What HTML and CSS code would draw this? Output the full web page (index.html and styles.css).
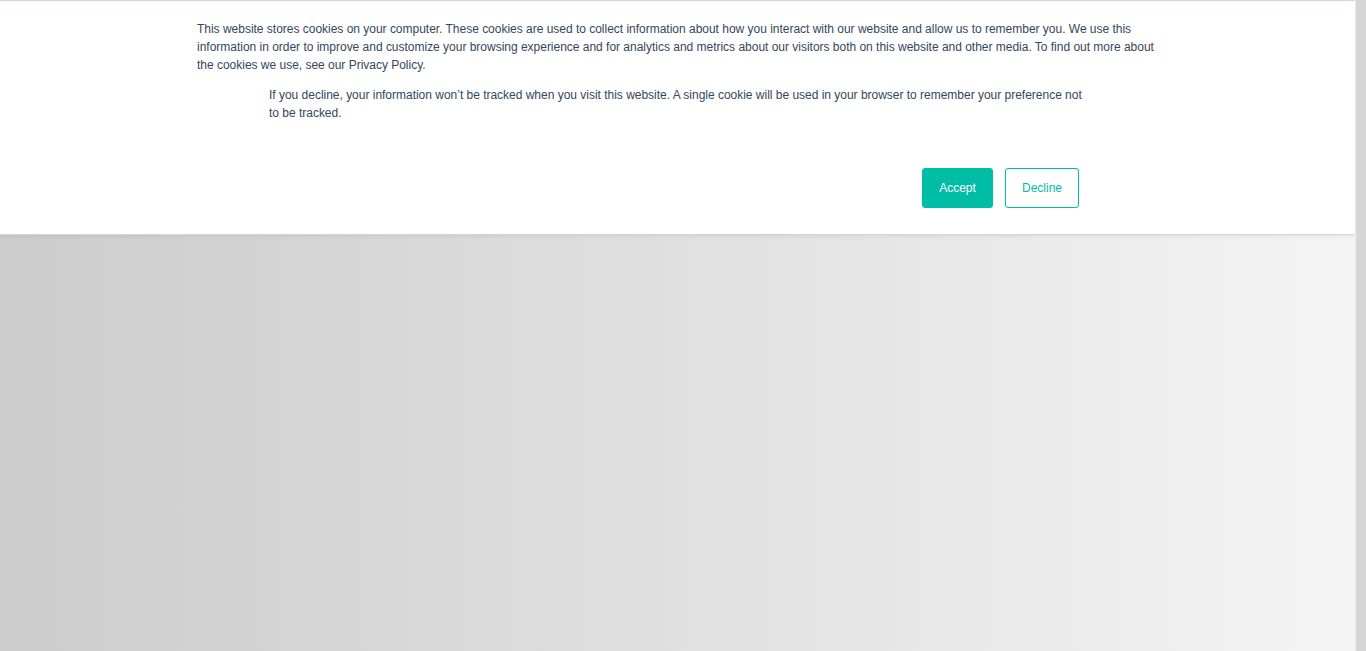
FILE: index.html
```html
<!DOCTYPE html>
<html lang="en">
<head>
  <meta charset="UTF-8">
  <title>Cookie Banner</title>
  <link rel="stylesheet" href="styles.css">
</head>
<body>

  <div class="page">
    <div class="viewport">
      <div class="cookie-banner" id="cookieBanner">
        <div class="banner-inner">
          <p class="policy-wording">This website stores cookies on your computer. These cookies are used to collect information about how you interact with our website and allow us to remember you. We use this information in order to improve and customize your browsing experience and for analytics and metrics about our visitors both on this website and other media. To find out more about the cookies we use, see our Privacy Policy.</p>
          <div class="decline-area">
            <p class="decline-wording">If you decline, your information won’t be tracked when you visit this website. A single cookie will be used in your browser to remember your preference not to be tracked.</p>
            <div class="buttons">
              <button class="accept-btn">Accept</button>
              <button class="decline-btn">Decline</button>
            </div>
          </div>
        </div>
      </div>
    </div>
    <div class="scrollbar"></div>
  </div>

</body>
</html>
```

FILE: styles.css
```css
html, body {
  margin: 0;
  height: 100%;
  overflow: hidden;
}

body {
  font-family: "Liberation Sans", Arial, sans-serif;
}

.page {
  display: flex;
  height: 651px;
}

.viewport {
  flex: 1;
  background: linear-gradient(to right, #cccccc, #f4f4f4);
}

.scrollbar {
  width: 11px;
  background-color: #d6d6d6;
  border-left: 1px solid #ececec;
  box-sizing: border-box;
}

.cookie-banner {
  background-color: #fff;
  border-top: 1px solid #cbd6e2;
  border-bottom: 1px solid #cbd6e2;
  box-shadow: 0 1px 5px rgba(0, 0, 0, 0.08);
  height: 235px;
  box-sizing: border-box;
}

.banner-inner {
  width: 960px;
  margin: 0 auto;
  padding: 19px 1px 0 0;
}

.policy-wording,
.decline-wording {
  margin: 0;
  font-size: 12px;
  line-height: 18px;
  letter-spacing: -0.015px;
  color: #33475b;
}

.policy-wording {
  margin-bottom: 12px;
}

.decline-area {
  margin: 0 72px;
}

.buttons {
  display: flex;
  justify-content: flex-end;
  gap: 12px;
  margin-top: 46px;
  padding-right: 6px;
}

.accept-btn,
.decline-btn {
  font-family: "Liberation Sans", Arial, sans-serif;
  font-size: 12px;
  height: 40px;
  border-radius: 3px;
  cursor: pointer;
}

.accept-btn {
  width: 71px;
  background-color: #00bda5;
  border: 1px solid #00bda5;
  color: #fff;
}

.decline-btn {
  width: 74px;
  background-color: #fff;
  border: 1px solid #00bda5;
  color: #00bda5;
}
```
